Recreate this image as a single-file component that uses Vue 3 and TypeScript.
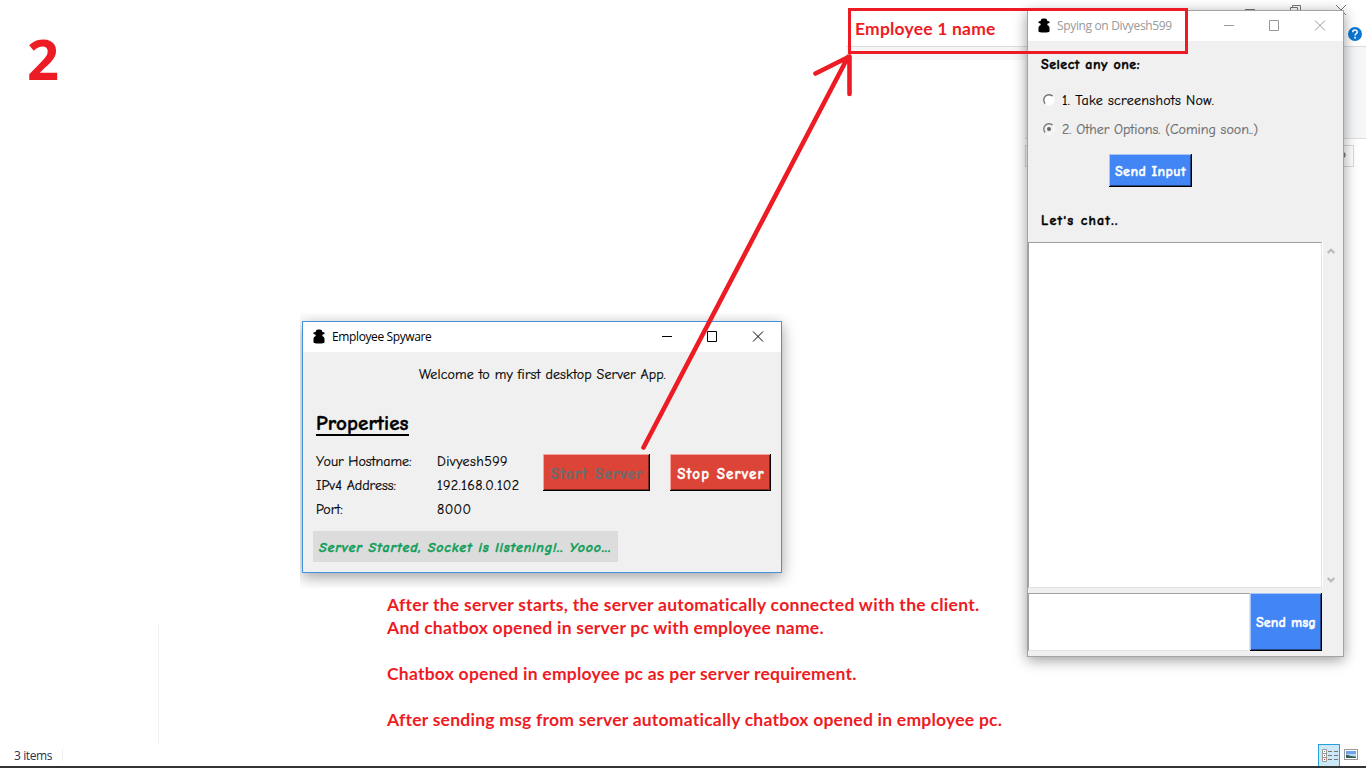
<script setup lang="ts">
interface Property {
  label: string
  value: string
}

const properties: Property[] = [
  { label: 'Your Hostname:', value: 'Divyesh599' },
  { label: 'IPv4 Address:', value: '192.168.0.102' },
  { label: 'Port:', value: '8000' },
]
</script>

<template>
  <div class="screen">
    <!-- File explorer behind the two windows -->
    <div class="explorer-strip"></div>
    <div class="explorer-ribbon"></div>
    <div class="explorer-address"></div>
    <div class="explorer-pane-line"></div>
    <svg class="explorer-controls" width="126" height="170" viewBox="0 0 126 170">
      <g fill="none" stroke="#777" stroke-width="1">
        <path d="M5 9.500H15M50.500 13V7.500H57.500V13M52.500 7.500V5.500H60.500V12M96 5L106 15M106 5L96 15" />
      </g>
      <circle cx="115" cy="34" r="7" fill="#0a78d4" />
      <path d="M112.700 32.300C112.700 29.200 117.300 29.300 117.200 32.100C117.100 33.800 115 33.800 115 35.600" fill="none" stroke="#fff" stroke-width="1.500" />
      <rect x="114.200" y="36.800" width="1.700" height="1.700" fill="#fff" />
      <path d="M103 152Q107 155 103 158" fill="none" stroke="#777" stroke-width="1.500" />
    </svg>

    <div class="step">2</div>

    <div class="server-clip">
      <section class="window server">
        <header class="titlebar">
          <svg class="spy" width="12" height="15" viewBox="0 0 12 15">
            <path d="M2.600 3L3.400 1Q4.700 0 6 .6Q7.300 0 8.600 1L9.400 3L11.500 3.500V5L9.600 5.500L9.300 7Q11.300 7.600 11.500 9.500V13.600Q11 14.600 6 14.600Q1 14.600 .5 13.600V9.500Q.7 7.600 2.700 7L2.400 5.500L.5 5V3.500Z" />
          </svg>
          <span class="title">Employee Spyware</span>
          <svg class="controls" width="104" height="12" viewBox="0 0 104 12">
            <path d="M1 5.500H11M46.500 .5H55.500V10.500H46.500ZM92 .5L102 10.500M102 .5L92 10.500" />
          </svg>
        </header>
        <div class="server-body">
          <p class="welcome">Welcome to my first desktop Server App.</p>
          <h2 class="heading">Properties</h2>
          <div class="server-row">
            <dl class="properties">
              <div v-for="p in properties" :key="p.label" class="property">
                <dt>{{ p.label }}</dt>
                <dd>{{ p.value }}</dd>
              </div>
            </dl>
            <button class="btn red start" disabled><span>Start Server</span></button>
            <button class="btn red stop"><span>Stop Server</span></button>
          </div>
          <p class="status"><span>Server Started, Socket is listening!.. Yooo...</span></p>
        </div>
      </section>
    </div>

    <section class="window chat">
      <header class="titlebar">
        <svg class="spy" width="12" height="15" viewBox="0 0 12 15">
          <path d="M2.600 3L3.400 1Q4.700 0 6 .6Q7.300 0 8.600 1L9.400 3L11.500 3.500V5L9.600 5.500L9.300 7Q11.300 7.600 11.500 9.500V13.600Q11 14.600 6 14.600Q1 14.600 .5 13.600V9.500Q.7 7.600 2.700 7L2.400 5.500L.5 5V3.500Z" />
        </svg>
        <span class="title">Spying on Divyesh599</span>
        <svg class="controls" width="104" height="12" viewBox="0 0 104 12">
          <path d="M1 5.500H11M46.500 .5H55.500V10.500H46.500ZM92 .5L102 10.500M102 .5L92 10.500" />
        </svg>
      </header>
      <div class="chat-body">
        <h3 class="select">Select any one:</h3>
        <label class="option first">
          <svg width="12" height="12" viewBox="0 0 12 12">
            <circle cx="6" cy="6" r="5" fill="#fff" />
            <path d="M2.300 9.700A5.200 5.200 0 0 1 9.700 2.300" fill="none" stroke="#696969" stroke-width="1.300" />
            <path d="M9.700 2.300A5.200 5.200 0 0 1 2.300 9.700" fill="none" stroke="#fff" />
          </svg>
          <span>1. Take screenshots Now.</span>
        </label>
        <label class="option second">
          <svg width="12" height="12" viewBox="0 0 12 12">
            <circle cx="6" cy="6" r="5" fill="#f0f0f0" />
            <path d="M2.300 9.700A5.200 5.200 0 0 1 9.700 2.300" fill="none" stroke="#777" stroke-width="1.300" />
            <path d="M9.700 2.300A5.200 5.200 0 0 1 2.300 9.700" fill="none" stroke="#fff" />
            <circle cx="6" cy="6" r="2" fill="#666" />
          </svg>
          <span>2. Other Options. (Coming soon..)</span>
        </label>
        <button class="btn blue input-btn"><span>Send Input</span></button>
        <h3 class="lets">Let's chat..</h3>
        <div class="history">
          <div class="sunken log"></div>
          <div class="scrollbar">
            <svg width="8" height="6" viewBox="0 0 8 6"><path d="M.7 5L4 1.700L7.300 5" /></svg>
            <svg width="8" height="6" viewBox="0 0 8 6"><path d="M.7 1L4 4.300L7.300 1" /></svg>
          </div>
        </div>
        <div class="compose">
          <div class="sunken message"></div>
          <button class="btn blue msg-btn"><span>Send msg</span></button>
        </div>
      </div>
    </section>

    <div class="notes">
      <p class="n1">After the server starts, the server automatically connected with the client.</p>
      <p class="n2">And chatbox opened in server pc with employee name.</p>
      <p class="n3">Chatbox opened in employee pc as per server requirement.</p>
      <p class="n4">After sending msg from server automatically chatbox opened in employee pc.</p>
    </div>

    <div class="callout"><span>Employee 1 name</span></div>
    <svg class="arrow" width="1366" height="768" viewBox="0 0 1366 768">
      <path d="M643.500 447.500L848 57M815.500 73.500L849.500 56.500V94" />
    </svg>

    <footer class="statusbar">
      <span class="items">3 items</span>
      <i class="separator"></i>
      <svg class="views" width="48" height="22" viewBox="0 0 48 22">
        <rect x=".5" y=".5" width="21" height="22" fill="#cce8f6" stroke="#26a0da" />
        <path d="M4.500 5.500H8.500V17.500H4.500ZM4.500 9.500H8.500M4.500 13.500H8.500" fill="#fff" stroke="#999" />
        <path d="M10 7.500H14M16 7.500H20M10 11.500H14M16 11.500H20M10 15.500H14M16 15.500H20" stroke="#777" />
        <path d="M6 7.500H7M6 11.500H7" stroke="#777" />
        <path d="M6 15.500H7" stroke="#d22" />
        <rect x="26.500" y="5.500" width="13" height="10" fill="#fff" stroke="#999" />
        <rect x="28" y="7" width="10" height="4" fill="#6ea3e8" />
        <rect x="28" y="10" width="10" height="2" fill="#bcd8f2" />
        <path d="M28 10.500L33 12L38 12.500V14H28Z" fill="#34605c" />
      </svg>
    </footer>
    <div class="taskbar"></div>
  </div>
</template>

<style>
body {
  margin: 0;
  overflow: hidden;
}
</style>

<style scoped>
.screen {
  position: relative;
  width: 1366px;
  height: 768px;
  overflow: hidden;
  background: #fff;
  color: #000;
  font-family: "Comic Sans MS", "Comic Neue", "Open Sans", sans-serif;
  font-size: 14px;
}
p, h2, h3, dl, dt, dd {
  margin: 0;
}
span, h2, h3, p {
  white-space: nowrap;
}
.explorer-strip {
  position: absolute;
  left: 846px;
  top: 46px;
  width: 182px;
  height: 13px;
  border-top: 1px solid #dcdddd;
  background: #f5f6f6;
}
.explorer-ribbon {
  position: absolute;
  left: 1025px;
  top: 46px;
  width: 341px;
  height: 91px;
  border-top: 1px solid #dcdddd;
  border-bottom: 1px solid #dcdddd;
  background: #f5f6f7;
}
.explorer-address {
  position: absolute;
  left: 1025px;
  top: 145px;
  width: 327px;
  height: 20px;
  border: 1px solid #d9d9d9;
}
.explorer-pane-line {
  position: absolute;
  left: 158px;
  top: 624px;
  width: 1px;
  height: 120px;
  background: #f2f2f2;
}
.explorer-controls {
  position: absolute;
  left: 1240px;
  top: 0;
}
.step {
  position: absolute;
  left: 27px;
  top: 22px;
  color: #ed1c24;
  font: 700 56px/72px "Open Sans", sans-serif;
}
.server-clip {
  position: absolute;
  left: 300px;
  top: 313px;
  width: 500px;
  height: 275px;
  padding: 8px 0 0 2px;
  box-sizing: border-box;
  overflow: hidden;
}
.window {
  display: flex;
  flex-direction: column;
  box-sizing: border-box;
  background: #f0f0f0;
}
.server {
  width: 480px;
  height: 252px;
  border: 1px solid #4492de;
  box-shadow: 0 4px 14px rgba(0, 0, 0, 0.38);
}
.chat {
  position: absolute;
  left: 1027px;
  top: 10px;
  width: 317px;
  height: 647px;
  border: 1px solid #a3a3a3;
  box-shadow: 0 3px 13px rgba(0, 0, 0, 0.4);
}
.titlebar {
  display: flex;
  align-items: center;
  height: 30px;
  padding-left: 10px;
  background: #fff;
  font: 12px/30px "Open Sans", sans-serif;
}
.spy {
  margin: -2px 7px 0 0;
}
.title {
  letter-spacing: -0.38px;
}
.chat .title {
  color: #999;
  letter-spacing: -0.35px;
}
.controls {
  margin-left: auto;
  margin-right: 16px;
  fill: none;
  stroke: #000;
}
.chat .controls {
  stroke: #999;
}
.server-body,
.chat-body {
  display: flex;
  flex-direction: column;
  -webkit-text-stroke: 0.2px currentColor;
}
.welcome {
  margin: 12px 0 0 116px;
  line-height: 22px;
  letter-spacing: 0.12px;
}
.heading {
  align-self: flex-start;
  margin: 26px 0 0 13px;
  border-bottom: 2px solid #000;
  font-size: 21px;
  line-height: 22px;
  letter-spacing: 0.1px;
}
.heading,
.select,
.lets,
.btn,
.status {
  -webkit-text-stroke: 0.4px currentColor;
}
.server-row {
  display: flex;
  align-items: flex-start;
  margin: 14px 0 0 13px;
}
.properties {
  width: 227px;
  display: flex;
  flex-direction: column;
}
.property {
  display: grid;
  grid-template-columns: 121px 1fr;
  line-height: 24px;
}
.property dd {
  letter-spacing: 0.43px;
}
.btn {
  display: flex;
  align-items: center;
  justify-content: center;
  box-sizing: border-box;
  padding: 0;
  border: 0;
  color: #fff;
  font-family: inherit;
  font-size: 14px;
  font-weight: 700;
}
.red {
  height: 37px;
  background: #db4437;
  box-shadow: inset -1px -1px #000, inset 1px 1px #f4a49d, inset -2px -2px #7e271f;
  font-size: 15px;
  letter-spacing: 1.15px;
}
.start {
  width: 107px;
  margin: 4px 20px 0 0;
  color: #6d6d6d;
  letter-spacing: 1.25px;
}
.stop {
  width: 101px;
  margin-top: 4px;
}
.red span {
  padding: 2px 0 0 1px;
}
.status {
  box-sizing: border-box;
  width: 305px;
  height: 31px;
  margin: 9px 0 0 10px;
  padding-left: 6px;
  background: #dcdcdc;
  color: #0f9d58;
  font-style: italic;
  font-weight: 700;
  line-height: 33px;
  letter-spacing: 0.83px;
}
.select {
  margin: 14px 0 0 13px;
  font-size: 14px;
  line-height: 20px;
  letter-spacing: 0.5px;
}
.option {
  display: flex;
  align-items: center;
  gap: 7px;
  margin-left: 15px;
  height: 20px;
}
.first {
  margin-top: 15px;
  letter-spacing: 0.28px;
}
.second {
  margin-top: 9px;
  color: #6d6d6d;
}
.blue {
  background: #4285f4;
  box-shadow: inset -1px -1px #000, inset 1px 1px #a8c6fa, inset -2px -2px #23488a;
}
.input-btn {
  width: 83px;
  height: 33px;
  margin: 15px 0 0 81px;
  letter-spacing: 0.4px;
}
.input-btn span {
  padding-top: 2px;
}
.lets {
  margin: 24px 0 0 13px;
  font-size: 14px;
  line-height: 20px;
  letter-spacing: 1.2px;
}
.history {
  display: flex;
  height: 346px;
  margin-top: 11px;
}
.sunken {
  box-sizing: border-box;
  border: 1px solid;
  border-color: #a0a0a0 #e3e3e3 #e3e3e3 #a0a0a0;
  background: #fff;
}
.log {
  width: 294px;
}
.scrollbar {
  display: flex;
  flex-direction: column;
  align-items: center;
  justify-content: space-between;
  box-sizing: border-box;
  width: 16px;
  padding: 6px 0 5px;
  border-left: 1px solid #fff;
}
.scrollbar svg {
  fill: none;
  stroke: #b8b8b8;
  stroke-width: 2;
}
.compose {
  display: flex;
  height: 58px;
  margin-top: 5px;
}
.message {
  width: 222px;
}
.msg-btn {
  width: 72px;
  letter-spacing: 0.1px;
}
.notes {
  position: absolute;
  left: 387px;
  top: 593px;
  color: #ed1c24;
  font: 700 17.5px/23px Lato, sans-serif;
  font-variant-ligatures: none;
  letter-spacing: 0.24px;
}
.n1 {
  letter-spacing: 0.28px;
}
.n3,
.n4 {
  margin-top: 23px;
}
.callout {
  position: absolute;
  left: 848px;
  top: 8px;
  box-sizing: border-box;
  width: 340px;
  height: 46px;
  padding-left: 4px;
  border: 3px solid #ed1c24;
  color: #ed1c24;
  font: 700 17.5px/36px Lato, sans-serif;
  letter-spacing: 0.2px;
}
.arrow {
  position: absolute;
  left: 0;
  top: 0;
  fill: none;
  stroke: #ed1c24;
  stroke-width: 4.600;
  stroke-linecap: round;
  stroke-linejoin: round;
}
.statusbar {
  position: absolute;
  left: 0;
  right: 0;
  top: 744px;
  height: 22px;
  display: flex;
  align-items: center;
  padding-left: 14px;
  color: #27344f;
  font: 12px/22px "Open Sans", sans-serif;
}
.items {
  padding-top: 2px;
  letter-spacing: -0.4px;
}
.separator {
  width: 1px;
  height: 12px;
  margin-left: 10px;
  background: #eee;
}
.views {
  margin-left: auto;
}
.taskbar {
  position: absolute;
  left: 0;
  right: 0;
  bottom: 0;
  height: 2px;
  background: #323335;
}
</style>
